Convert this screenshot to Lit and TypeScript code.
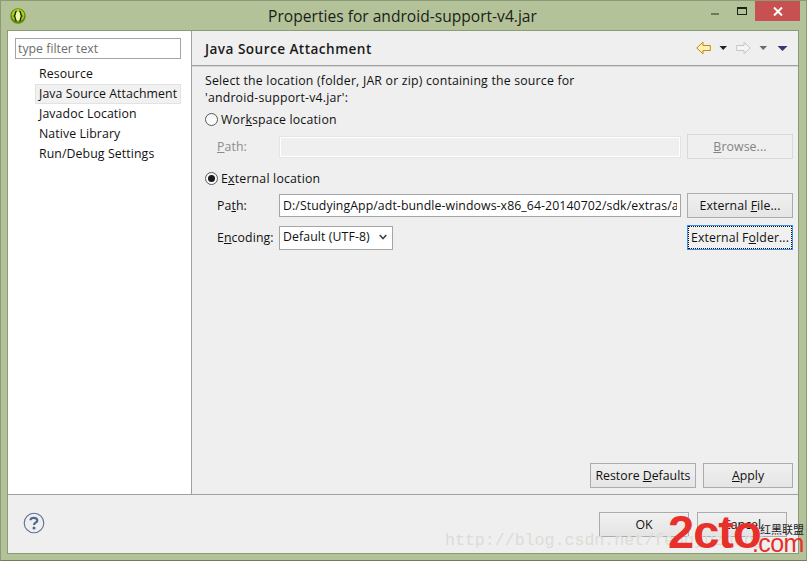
import { LitElement, html, css } from "lit";
import { customElement } from "lit/decorators.js";

@customElement("app-root")
export class AppRoot extends LitElement {
  static styles = css`
    :host { display: block; width: 807px; height: 561px; position: relative; overflow: hidden; font-family: "Open Sans", "Noto Sans", sans-serif; font-size: 12.3px; color: #111; }
    * { box-sizing: border-box; }
    .window { width: 807px; height: 561px; background: #b3c299; border: 1px solid #8b9b78; border-bottom-color: #6f7d5f; display: flex; flex-direction: column; padding: 0 7px 6px 6px; }
    .title { height: 29px; flex: none; display: flex; align-items: flex-start; margin: 0 -7px 0 -6px; }
    .appicon { width: 16px; height: 16px; margin: 7px 0 0 9px; flex: none; }
    .titletext { flex: 1; text-align: center; font-size: 15.6px; line-height: 30px; color: #1b1f15; padding-left: 68px; }
    .winbtns { display: flex; align-items: flex-start; flex: none; margin-right: 6px; }
    .min { width: 8px; height: 2px; background: #6b7a5c; margin: 12px 0 0 0; }
    .max { width: 10px; height: 8px; border: 1px solid #1d2116; border-top-width: 2px; margin: 6px 0 0 18px; }
    .close { width: 45px; height: 20px; background: #c75050; margin: 0 0 0 8px; display: flex; align-items: center; justify-content: center; }
    .body { flex: 1; display: flex; flex-direction: column; background: #efefef; border: 1px solid #8b9b78; min-height: 0; }
    .top { height: 464px; display: flex; flex: none; border-bottom: 1px solid #a0a0a0; }
    .side { width: 184px; flex: none; background: #fff; border-right: 1px solid #a0a0a0; padding: 7px 0 0 7px; display: flex; flex-direction: column; }
    .filter { width: 166px; height: 21px; border: 1px solid #a5a5a5; outline: none; font: inherit; color: #6d6d6d; padding: 0 2px; background: #fff; margin-bottom: 5px; flex: none; }
    .tree { display: flex; flex-direction: column; margin-left: 20px; letter-spacing: 0.1px; }
    .item { height: 20px; line-height: 20px; white-space: nowrap; padding-left: 4px; }
    .item.sel { background: #f1f1f1; border: 1px solid #e3e3e3; line-height: 18px; padding-left: 3px; width: 146px; }
    .main { flex: 1; display: flex; flex-direction: column; min-width: 0; }
    .head { height: 35px; flex: none; border-bottom: 1px solid #a0a0a0; box-shadow: 0 1px #d8d8d8; display: flex; align-items: center; padding: 0 10px 0 13px; }
    .head h2 { margin: 0; font-size: 13.6px; font-weight: 600; flex: 1; color: #1a1a1a; letter-spacing: 0.45px; }
    .nav { display: block; flex: none; }
    .content { flex: 1; display: flex; flex-direction: column; padding: 6px 5px 6px 13px; }
    .desc { line-height: 17px; margin: 0 0 3px; letter-spacing: 0.2px; }
    .radio { display: flex; align-items: center; gap: 3px; height: 20px; letter-spacing: 0.2px; }
    .rb { width: 13px; height: 13px; border-radius: 50%; border: 1px solid #5a5a5a; background: linear-gradient(#f2f2f2, #fff); display: flex; align-items: center; justify-content: center; flex: none; }
    .rb i { width: 7px; height: 7px; border-radius: 50%; background: #1a1a1a; display: block; }
    .grid { display: grid; grid-template-columns: 62px 402px 112px; align-items: center; padding-left: 12px; letter-spacing: 0.1px; }
    .grid .b { margin-left: 6px; }
    .g1 { margin: 5px 0 9px; row-gap: 6px; }
    .g2 { margin-top: 5px; row-gap: 7px; }
    .dis { color: #8c8c8c; }
    .in { height: 23px; width: 402px; border: 1px solid #a5a5a5; font: inherit; letter-spacing: 0.08px; color: #111; padding: 0 3px; background: #fff; outline: none; }
    .in.off { height: 22px; background: #efefef; border: 2px solid #fff; outline: 1px solid #e4e4e4; outline-offset: -1px; }
    .dd { width: 114px; height: 24px; border: 1px solid #a5a5a5; background: #fff; display: flex; align-items: center; justify-content: space-between; padding: 0 5px 2px 3px; }
    .b { height: 25px; border: 1px solid #acacac; background: linear-gradient(#f0f0f0, #e5e5e5); display: flex; align-items: center; justify-content: center; white-space: nowrap; color: #111; padding-bottom: 1px; }
    .b.off { background: #efefef; border-color: #d9d9d9; color: #838383; }
    .b.focus { border: 1px solid #3c8fe8; outline: 1px dotted #111; outline-offset: -2px; background: #f0f0f0; }
    .w-restore { width: 106px; }
    .w-apply { width: 90px; }
    .w-dlg { width: 90px; }
    .spacer { flex: 1; }
    .actions { display: flex; justify-content: flex-end; gap: 7px; }
    .foot { flex: 1; display: flex; align-items: center; justify-content: space-between; padding: 0 11px 0 15px; }
    .help { margin-top: -2px; }
    .foot .acts { display: flex; gap: 8px; margin-top: 1px; }
    .mark { position: absolute; left: 445px; top: 531px; font-family: "Liberation Mono", monospace; font-size: 16.6px; color: #dcdcd6; white-space: nowrap; line-height: 20px; }
    .logo { position: absolute; left: 668px; top: 513px; width: 139px; height: 43px; color: #e8302a; font-family: "Liberation Sans", sans-serif; font-weight: 700; white-space: nowrap; }
    .logo .big { position: absolute; left: 0; top: -7px; font-size: 47px; letter-spacing: -1px; line-height: 52px; }
    .logo .com { position: absolute; left: 84px; top: 17px; font-size: 25px; font-weight: 400; line-height: 26px; letter-spacing: -0.6px; }
    .logo .cn { position: absolute; left: 92px; top: 10px; font-family: "Noto Sans CJK SC", sans-serif; font-size: 11px; font-weight: 400; color: #222; line-height: 13px; }
  `;

  render() {
    return html`
      <div class="window">
        <div class="title">
          <svg class="appicon" viewBox="0 0 16 16">
            <circle cx="8" cy="8" r="7.7" fill="#5f8a05"/>
            <circle cx="8" cy="7.2" r="6.2" fill="#a9d01a"/>
            <ellipse cx="8" cy="8" rx="3" ry="4.6" fill="#eef5b0"/>
            <path d="M6.6 3.2C4.8 3.2 5.8 7.2 4.3 8C5.8 8.8 4.8 12.8 6.6 12.8M9.4 3.2C11.2 3.2 10.2 7.2 11.7 8C10.2 8.8 11.2 12.8 9.4 12.8" fill="none" stroke="#18240a" stroke-width="1.4"/>
          </svg>
          <div class="titletext">Properties for android-support-v4.jar</div>
          <div class="winbtns">
            <div class="min"></div>
            <div class="max"></div>
            <div class="close">
              <svg width="10" height="9" viewBox="0 0 10 9"><path d="M1 .5L9 8.5M9 .5L1 8.5" stroke="#fff" stroke-width="2"/></svg>
            </div>
          </div>
        </div>
        <div class="body">
          <div class="top">
            <div class="side">
              <input class="filter" .value=${"type filter text"} />
              <div class="tree">
                <div class="item">Resource</div>
                <div class="item sel">Java Source Attachment</div>
                <div class="item">Javadoc Location</div>
                <div class="item">Native Library</div>
                <div class="item">Run/Debug Settings</div>
              </div>
            </div>
            <div class="main">
              <div class="head">
                <h2>Java Source Attachment</h2>
                <svg class="nav" width="92" height="14" viewBox="0 0 92 14">
                  <path d="M.7 7L7 1.2V4.5H14.3V9.5H7V12.8Z" fill="#fff2b4" stroke="#c48a10" stroke-width="1"/>
                  <path d="M23.5 5H31L27.2 9Z" fill="#222"/>
                  <path d="M54.3 7L48 1.2V4.5H40.7V9.5H48V12.8Z" fill="#f4f4f4" stroke="#c4c4c4" stroke-width="1"/>
                  <path d="M63.5 5H71L67.2 9Z" fill="#6a6a6a"/>
                  <path d="M81.5 5H91.5L86.5 10Z" fill="#3c3578"/>
                </svg>
              </div>
              <div class="content">
                <p class="desc">Select the location (folder, JAR or zip) containing the source for<br />'android-support-v4.jar':</p>
                <div class="radio"><span class="rb"></span><span>Wor<u>k</u>space location</span></div>
                <div class="grid g1">
                  <span class="dis"><u>P</u>ath:</span>
                  <input class="in off" disabled />
                  <div class="b off"><span><u>B</u>rowse...</span></div>
                </div>
                <div class="radio"><span class="rb"><i></i></span><span>E<u>x</u>ternal location</span></div>
                <div class="grid g2">
                  <span>Pa<u>t</u>h:</span>
                  <input class="in" .value=${"D:/StudyingApp/adt-bundle-windows-x86_64-20140702/sdk/extras/android/support/v4/src"} />
                  <div class="b"><span>External <u>F</u>ile...</span></div>
                  <span>E<u>n</u>coding:</span>
                  <div class="dd"><span>Default (UTF-8)</span>
                    <svg width="8" height="6" viewBox="0 0 8 6"><path d="M.7 1L4 4.5L7.3 1" fill="none" stroke="#444" stroke-width="1.6"/></svg>
                  </div>
                  <div class="b focus"><span>External F<u>o</u>lder...</span></div>
                </div>
                <div class="spacer"></div>
                <div class="actions">
                  <div class="b w-restore"><span>Restore <u>D</u>efaults</span></div>
                  <div class="b w-apply"><span><u>A</u>pply</span></div>
                </div>
              </div>
            </div>
          </div>
          <div class="foot">
            <svg class="help" width="22" height="22" viewBox="0 0 22 22">
              <circle cx="11" cy="11" r="9.8" fill="none" stroke="#5a6f98" stroke-width="1.1"/>
              <path d="M7.5 8.3C7.7 5.2 14.3 5 14.3 8.4C14.3 10.7 11 10.6 11 13" fill="none" stroke="#52668f" stroke-width="2.2"/>
              <circle cx="11" cy="16" r="1.5" fill="#52668f"/>
            </svg>
            <div class="acts">
              <div class="b w-dlg"><span>OK</span></div>
              <div class="b w-dlg"><span>Cancel</span></div>
            </div>
          </div>
        </div>
      </div>
      <div class="mark">http://blog.csdn.net/fengyuzhong</div>
      <div class="logo">
        <span class="big">2cto</span>
        <span class="cn">红黑联盟</span>
        <span class="com">.com</span>
      </div>
    `;
  }
}
